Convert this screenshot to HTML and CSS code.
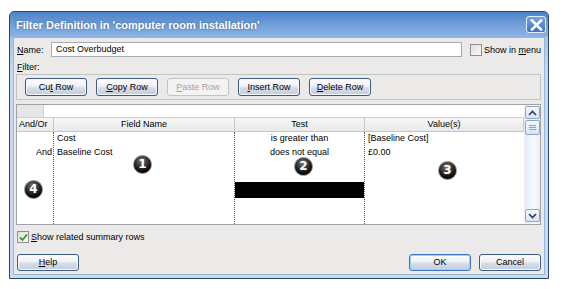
FILE: index.html
```html
<!DOCTYPE html>
<html lang="en">

<head>
    <meta charset="utf-8">
    <title>Filter Definition</title>
    <link rel="stylesheet" href="styles.css">
</head>

<body>
    <div class="dialog">
        <!-- title bar -->
        <div class="titlebar">
            <span class="title">Filter Definition in 'computer room installation'</span>
            <span class="close">
                <svg width="13" height="12" viewBox="0 0 13 12"><path d="M2 1.5 L11 10.5 M11 1.5 L2 10.5" stroke="#fff" stroke-width="2.6" stroke-linecap="square"/></svg>
            </span>
        </div>

        <div class="client">
            <div class="name-row">
                <span class="name-label"><u>N</u>ame:</span>
                <span class="textbox">Cost Overbudget</span>
                <span class="check"></span>
                <span class="nowrap">Show in <u>m</u>enu</span>
            </div>

            <div class="filter-label"><u>F</u>ilter:</div>

            <div class="toolbar">
                <span class="btn">Cu<u>t</u> Row</span>
                <span class="btn"><u>C</u>opy Row</span>
                <span class="btn disabled"><u>P</u>aste Row</span>
                <span class="btn"><u>I</u>nsert Row</span>
                <span class="btn"><u>D</u>elete Row</span>
            </div>

            <div class="grid">
                <div class="grid-main">
                    <div class="edit-row">
                        <span class="edit-corner"></span>
                        <span class="edit-box"></span>
                    </div>
                    <div class="cols">
                        <div class="col col-andor">
                            <div class="col-head">And/Or</div>
                            <div class="col-body">
                                <div class="cell"></div>
                                <div class="cell right">And</div>
                            </div>
                        </div>
                        <div class="col col-field">
                            <div class="col-head">Field Name</div>
                            <div class="col-body">
                                <div class="cell">Cost</div>
                                <div class="cell">Baseline Cost</div>
                            </div>
                        </div>
                        <div class="col col-test">
                            <div class="col-head">Test</div>
                            <div class="col-body">
                                <div class="cell center">is greater than</div>
                                <div class="cell center">does not equal</div>
                                <div class="black-bar"></div>
                            </div>
                        </div>
                        <div class="col col-value">
                            <div class="col-head">Value(s)</div>
                            <div class="col-body">
                                <div class="cell">[Baseline Cost]</div>
                                <div class="cell">£0.00</div>
                            </div>
                        </div>
                    </div>
                </div>

                <div class="vscroll">
                    <span class="sbtn">
                        <svg width="9" height="6" viewBox="0 0 9 6"><path d="M1 5 L4.5 1.5 L8 5" fill="none" stroke="#2c3f5c" stroke-width="1.6"/></svg>
                    </span>
                    <span class="thumb">
                        <svg width="7" height="5" viewBox="0 0 7 5"><path d="M0 0.5 H7 M0 2.5 H7 M0 4.5 H7" stroke="#8da2c0" stroke-width="1"/></svg>
                    </span>
                    <span class="track"></span>
                    <span class="sbtn">
                        <svg width="9" height="6" viewBox="0 0 9 6"><path d="M1 1 L4.5 4.5 L8 1" fill="none" stroke="#2c3f5c" stroke-width="1.6"/></svg>
                    </span>
                </div>

                <!-- numbered callouts lying over the grid -->
                <span class="badge b1">1</span>
                <span class="badge b2">2</span>
                <span class="badge b3">3</span>
                <span class="badge b4">4</span>
            </div>

            <div class="summary-row">
                <span class="check checked">
                    <svg width="9" height="9" viewBox="0 0 9 9"><path d="M1 4.5 L3.5 7 L8 1.5" fill="none" stroke="#2e9a2e" stroke-width="1.8"/></svg>
                </span>
                <span><u>S</u>how related summary rows</span>
            </div>

            <div class="button-row">
                <span class="btn wide"><u>H</u>elp</span>
                <span class="right-buttons">
                    <span class="btn wide default">OK</span>
                    <span class="btn wide">Cancel</span>
                </span>
            </div>
        </div>
    </div>
</body>

</html>
```

FILE: styles.css
```css
body {
    margin: 0;
    background: #fff;
    font-family: 'Liberation Sans', Arial, sans-serif;
    font-size: 9px;
    color: #000;
}

.dialog {
    margin: 11px 0 0 9px;
    width: 538px;
    height: 266px;
    border: 1px solid #2b4468;
    border-radius: 5px 5px 0 0;
    background: linear-gradient(#8fb5e5, #c4d9f2 60px, #cadcf2);
    display: flex;
    flex-direction: column;
}

.titlebar {
    height: 25px;
    display: flex;
    align-items: center;
    justify-content: space-between;
    padding: 0 2px 0 6px;
    border-radius: 4px 4px 0 0;
    background: linear-gradient(#4c80c7, #74a2da 55%, #8db4e5);
}

.title {
    color: #fff;
    font-size: 11px;
    font-weight: bold;
    text-shadow: 0 0 3px #3b6296;
}

.close {
    width: 18px;
    height: 15px;
    border: 1px solid #e3edf9;
    border-radius: 3px;
    background: linear-gradient(#77a4e2, #3f72c2);
    display: flex;
    align-items: center;
    justify-content: center;
}

.client {
    flex: 1;
    margin: 0 3px 3px 3px;
    border: 1px solid #9db5d4;
    background: #ece9e9;
    padding: 4px 3px 0 2px;
    display: flex;
    flex-direction: column;
}

u {
    text-decoration: underline;
}

.nowrap {
    white-space: nowrap;
}

.name-row {
    height: 15px;
    display: flex;
    align-items: center;
}

.name-label {
    width: 34px;
    padding-left: 1px;
}

.textbox {
    width: 406px;
    height: 13px;
    line-height: 13px;
    border: 1px solid #a5acb5;
    background: #fff;
    padding-left: 4px;
    margin-right: 8px;
}

.check {
    width: 10px;
    height: 10px;
    border: 1px solid #8e8f8f;
    background: linear-gradient(135deg, #dcdcdc, #fbfbfb);
    margin-right: 2px;
    display: inline-flex;
    align-items: center;
    justify-content: center;
}

.filter-label {
    margin-top: 5px;
    height: 12px;
    padding-left: 1px;
}

.toolbar {
    height: 21px;
    border: 1px solid #c4c4c4;
    padding: 3px 0 0 8px;
    display: flex;
    gap: 9px;
}

.btn {
    display: block;
    width: 60px;
    height: 16px;
    line-height: 16px;
    text-align: center;
    border: 1px solid #3d5a80;
    border-radius: 3px;
    background: linear-gradient(#fdfdfe, #eef1f6 45%, #d6dde8 55%, #c3cedd);
    box-shadow: inset 0 0 0 1px #f6f8fb;
}

.btn.disabled {
    color: #a3a3a3;
    border-color: #c0c4c9;
    background: #f3f3f3;
    box-shadow: none;
}

.grid {
    position: relative;
    margin-top: 4px;
    height: 119px;
    border: 1px solid #9fa3a8;
    background: #fff;
    display: flex;
}

.grid-main {
    width: 507px;
    display: flex;
    flex-direction: column;
}

.edit-row {
    height: 12px;
    display: flex;
    border-bottom: 1px solid #d0d0d0;
}

.edit-corner {
    width: 26px;
    background: #e6e6e6;
    border-right: 1px solid #d0d0d0;
}

.edit-box {
    flex: 1;
    background: #fff;
}

.cols {
    flex: 1;
    display: flex;
}

.col {
    display: flex;
    flex-direction: column;
}

.col-andor {
    width: 37px;
}

.col-field {
    width: 181px;
}

.col-test {
    width: 130px;
}

.col-value {
    flex: 1;
}

.col-head {
    height: 13px;
    line-height: 13px;
    text-align: center;
    background: linear-gradient(#f6f6f6, #e9e9ea);
    border-right: 1px solid #c5c5c5;
    border-bottom: 1px solid #c5c5c5;
}

.col-andor .col-head {
    text-align: left;
    padding-left: 2px;
}

.col-body {
    flex: 1;
    border-right: 1px dotted #555;
}

.col-value .col-body {
    border-right: none;
}

.cell {
    height: 14px;
    line-height: 13px;
    padding: 0 3px;
    white-space: nowrap;
}

.cell.right {
    text-align: right;
    padding-right: 1px;
}

.cell.center {
    text-align: center;
}

.black-bar {
    margin-top: 22px;
    height: 16px;
    background: #000;
}

.vscroll {
    flex: 1;
    display: flex;
    flex-direction: column;
    align-items: center;
    padding: 1px 0 2px;
    background: linear-gradient(90deg, #e3edf9, #f7fafe 60%, #e6eef9);
    border-left: 1px solid #f0f0f0;
}

.sbtn,
.thumb {
    width: 13px;
    height: 11px;
    border: 1px solid #8ea6c6;
    border-radius: 2px;
    background: linear-gradient(#f5f9fe, #d8e5f5);
    display: flex;
    align-items: center;
    justify-content: center;
}

.thumb {
    height: 13px;
    margin-top: 1px;
}

.track {
    flex: 1;
}

.badge {
    position: absolute;
    width: 17px;
    height: 17px;
    border-radius: 50%;
    border: 1px solid #8c8c8c;
    background: radial-gradient(circle at 45% 30%, #7a7a7a, #2a2a2a 45%, #000 75%);
    color: #fff;
    font-family: 'DejaVu Sans', sans-serif;
    font-weight: bold;
    font-size: 12px;
    line-height: 17px;
    text-align: center;
}

.b1 {
    left: 116px;
    top: 50px;
}

.b2 {
    left: 277px;
    top: 52px;
}

.b3 {
    left: 421px;
    top: 56px;
}

.b4 {
    left: 7px;
    top: 75px;
}

.summary-row {
    margin-top: 6px;
    height: 12px;
    display: flex;
    align-items: center;
    padding-left: 1px;
}

.button-row {
    margin-top: 11px;
    display: flex;
    justify-content: space-between;
    padding-left: 1px;
}

.right-buttons {
    display: flex;
    gap: 8px;
}

.btn.wide {
    height: 15px;
    line-height: 15px;
}

.btn.default {
    border-color: #3a76c4;
    box-shadow: inset 0 0 0 1px #9ed0f5;
}
```
